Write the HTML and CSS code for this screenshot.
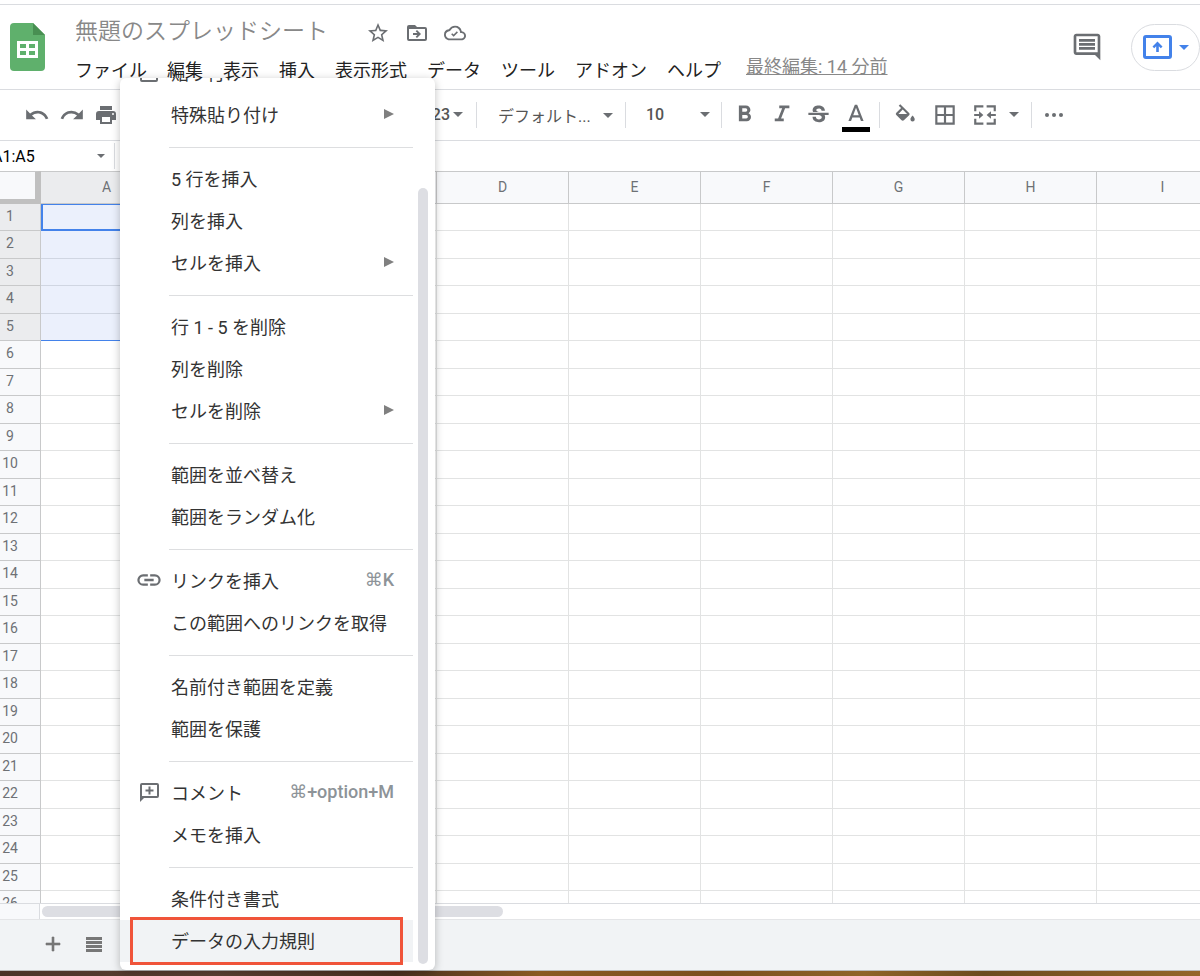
FILE: index.html
```html
<!DOCTYPE html>
<html lang="ja">
<head>
    <meta charset="utf-8">
    <title>無題のスプレッドシート</title>
    <link rel="stylesheet" href="styles.css">
</head>
<body>
    <header class="header">
        <a href="#" class="logo" aria-label="ホーム">
            <svg width="36" height="48" viewBox="0 0 36 48">
                <path d="M4 0H23L35 12V44a4 4 0 0 1-4 4H4a4 4 0 0 1-4-4V4a4 4 0 0 1 4-4z" fill="#5fb06c"/>
                <path d="M23 0L35 12H23z" fill="#488f52"/>
                <path d="M7 18H28V35H7zM10 21v4h6v-4zM19 21v4h6v-4zM10 28v4h6v-4zM19 28v4h6v-4z" fill="#fff" fill-rule="evenodd"/>
            </svg>
        </a>
        <div class="title-area">
            <div class="title-row">
                <h1>無題のスプレッドシート</h1>
                <button aria-label="スターを付ける">
                    <svg width="24" height="24" viewBox="0 0 24 24"><path d="M22 9.24l-7.19-.62L12 2 9.19 8.63 2 9.24l5.46 4.73L5.82 21 12 17.27 18.18 21l-1.63-7.03L22 9.24zM12 15.4l-3.76 2.27 1-4.28-3.32-2.88 4.38-.38L12 6.1l1.71 4.04 4.38.38-3.32 2.88 1 4.28L12 15.4z"/></svg>
                </button>
                <button aria-label="移動">
                    <svg width="24" height="24" viewBox="0 0 24 24"><path d="M20 6h-8l-2-2H4a2 2 0 0 0-2 2v12a2 2 0 0 0 2 2h16a2 2 0 0 0 2-2V8a2 2 0 0 0-2-2zm0 12H4V8h16zM12 9l4 4-4 4-1.3-1.3 1.7-1.7H8v-2h4.4l-1.7-1.7z"/></svg>
                </button>
                <button aria-label="保存状況">
                    <svg width="22" height="22" viewBox="0 0 24 24"><path d="M19.35 10.04A7.49 7.49 0 0 0 12 4C9.11 4 6.6 5.64 5.35 8.04A5.994 5.994 0 0 0 0 14c0 3.31 2.69 6 6 6h13c2.76 0 5-2.24 5-5 0-2.64-2.05-4.78-4.65-4.96zM19 18H6c-2.21 0-4-1.79-4-4 0-2.05 1.53-3.76 3.56-3.97l1.07-.11.5-.95A5.469 5.469 0 0 1 12 6c2.62 0 4.88 1.86 5.39 4.43l.3 1.5 1.53.11A2.98 2.98 0 0 1 22 15c0 1.65-1.35 3-3 3zm-8.500-4.300L9 12.200 7.800 13.400l2.700 2.700 4.700-4.700-1.200-1.200z"/></svg>
                </button>
            </div>
            <nav class="menubar">
                <button>ファイル</button>
                <button>編集</button>
                <button>表示</button>
                <button>挿入</button>
                <button>表示形式</button>
                <button>データ</button>
                <button>ツール</button>
                <button>アドオン</button>
                <button>ヘルプ</button>
                <a href="#">最終編集: 14 分前</a>
            </nav>
        </div>
        <div class="header-right">
            <button aria-label="コメント履歴">
                <svg width="32" height="32" viewBox="0 0 24 24"><path d="M21.99 4c0-1.100-.89-2-1.990-2H4c-1.100 0-2 .9-2 2v12c0 1.100.9 2 2 2h14l4 4-.01-18zM20 4v12H4V4zM6 6h12v2H6zm0 3h12v2H6zm0 3h12v2H6z"/></svg>
            </button>
            <button class="present" aria-label="会議に参加">
                <svg width="29" height="24" viewBox="0 0 29 24"><rect x="1.500" y="1.500" width="26" height="21" rx="1.500" fill="none" stroke="#4382ea" stroke-width="3"/><path d="M14.500 6.500l5 5-1.700 1.700-2-2V17h-2.600v-5.800l-2 2-1.700-1.700z"/></svg>
                <span class="arrow"></span>
            </button>
        </div>
    </header>

    <div class="toolbar">
        <button aria-label="元に戻す">
            <svg width="26" height="26" viewBox="0 0 24 24"><path d="M12.500 8c-2.650 0-5.050.99-6.900 2.600L2 7v9h9l-3.620-3.620A7.950 7.950 0 0 1 12.500 10.500c3.540 0 6.550 2.310 7.600 5.500l2.370-.78C21.080 11.030 17.150 8 12.500 8z"/></svg>
        </button>
        <button aria-label="やり直し">
            <svg width="26" height="26" viewBox="0 0 24 24"><path d="M18.400 10.600A10.500 10.500 0 0 0 11.500 8c-4.650 0-8.580 3.030-9.960 7.220L3.900 16a8 8 0 0 1 7.600-5.500c1.950 0 3.730.72 5.120 1.880L13 16h9V7z"/></svg>
        </button>
        <button aria-label="印刷">
            <svg width="24" height="24" viewBox="0 0 24 24"><path d="M19 8H5a3 3 0 0 0-3 3v6h4v4h12v-4h4v-6a3 3 0 0 0-3-3zm-3 11H8v-5h8zm3-7a1 1 0 1 1 0-2 1 1 0 0 1 0 2zM18 3H6v4h12z"/></svg>
        </button>
        <button class="formats">123<span class="arrow"></span></button>
        <span class="divider"></span>
        <button class="font-name">デフォルト...<span class="arrow"></span></button>
        <span class="divider"></span>
        <button class="font-size">10<span class="arrow"></span></button>
        <span class="divider"></span>
        <div class="tools">
            <button aria-label="太字">
                <svg width="27" height="27" viewBox="0 0 24 24"><path d="M15.600 10.790c.97-.67 1.650-1.770 1.650-2.790 0-2.260-1.750-4-4-4H7v14h7.040c2.090 0 3.710-1.700 3.710-3.790 0-1.520-.86-2.820-2.150-3.420zM10 6.500h3a1.500 1.500 0 0 1 0 3h-3zm3.500 9H10v-3h3.500a1.500 1.500 0 0 1 0 3z"/></svg>
            </button>
            <button aria-label="斜体">
                <svg width="27" height="27" viewBox="0 0 24 24"><path d="M10 4v2.500h2.600l-3.600 9H6V18h8v-2.500h-2.400l3.600-9H19V4z"/></svg>
            </button>
            <button aria-label="取り消し線">
                <svg width="27" height="27" viewBox="0 0 24 24"><path d="M7.200 9.800c-1.200-2.300.5-5 2.900-5.500 3.100-.9 7.600.4 7.600 4.400h-3c0-.3-.1-.6-.1-.8-.2-.6-.6-.9-1.200-1.100-.8-.3-2.100-.2-2.800.3-1.400 1.200.1 2.200 1.700 2.700H7.400c-.1-.1-.1-.1-.2 0zM21 12.500v-2H3v2h9.600c1.100.5 2.300.8 2.300 2 0 1.300-1.200 1.900-2.500 1.900-1.500 0-2.700-.6-2.700-2.300h-3c0 3.500 2.800 4.700 5.700 4.700 2.900 0 5.500-1.200 5.500-4.400 0-.8-.2-1.300-.5-1.900z"/></svg>
            </button>
            <button class="text-color" aria-label="テキストの色">
                <svg width="28" height="26" viewBox="0 0 24 22"><path d="M11 3L5.500 17h2.250l1.120-3h6.250l1.120 3h2.250L13 3zm-1.380 9L12 5.670 14.380 12z"/></svg>
            </button>
        </div>
        <span class="divider"></span>
        <div class="tools wide">
            <button aria-label="塗りつぶしの色">
                <svg width="26" height="26" viewBox="0 0 24 24"><path d="M15.800 10.200L7.620 2 6.210 3.410l2.180 2.180-4.400 4.400a1.490 1.490 0 0 0 0 2.120l4.850 4.850c.29.29.68.44 1.060.44s.77-.15 1.060-.44l4.840-4.640c.59-.58.59-1.530 0-2.120zM5.900 11L9.900 7l4 4zM19 12.500s-2 2.170-2 3.500a2 2 0 0 0 4 0c0-1.330-2-3.500-2-3.500z"/></svg>
            </button>
            <button aria-label="枠線">
                <svg width="26" height="26" viewBox="0 0 24 24"><path d="M3 3v18h18V3zm8 16H5v-6h6zm0-8H5V5h6zm8 8h-6v-6h6zm0-8h-6V5h6z"/></svg>
            </button>
            <button class="merge" aria-label="セルを結合">
                <svg width="26" height="26" viewBox="0 0 24 24"><path d="M2 3h8.500v2H4v3.500H2zM13.500 3H22v5.500h-2V5h-6.500zM2 15.500h2V19h6.500v2H2zM20 15.500h2V21h-8.500v-2H20zM2 11h4.500V8.500L10.500 12l-4 3.500V13H2zM22 11h-4.500V8.500l-4 3.500 4 3.500V13H22z"/></svg>
                <span class="arrow"></span>
            </button>
        </div>
        <span class="divider"></span>
        <button class="more" aria-label="その他">
            <svg width="20" height="6" viewBox="0 0 20 6"><circle cx="3" cy="3" r="2"/><circle cx="10" cy="3" r="2"/><circle cx="17" cy="3" r="2"/></svg>
        </button>
    </div>

    <div class="formula-bar">
        <input type="text" class="name-box" value="A1:A5" aria-label="名前ボックス">
        <span class="arrow small"></span>
        <input type="text" class="formula" aria-label="数式">
    </div>

    <main class="sheet">
        <table>
            <thead>
                <tr id="columns"><th class="corner"></th></tr>
            </thead>
            <tbody id="rows"></tbody>
        </table>
    </main>

    <div class="scroll-row">
        <div class="scroll-corner"></div>
        <div class="h-thumb"></div>
    </div>

    <footer class="footer">
        <button aria-label="シートを追加">
            <svg width="24" height="24" viewBox="0 0 24 24"><path d="M19 13h-6v6h-2v-6H5v-2h6V5h2v6h6z" stroke="#777" stroke-width=".6"/></svg>
        </button>
        <button aria-label="すべてのシート">
            <svg width="24" height="24" viewBox="0 0 24 24"><path d="M4 5h16v3H4zM4 9h16v3H4zM4 13h16v3H4zM4 17h16v3H4z"/></svg>
        </button>
    </footer>
    <div class="desktop"></div>

    <div class="menu">
        <div class="menu-list">
            <button class="item">
                <svg width="24" height="24" viewBox="0 0 24 24"><path d="M19 2h-4.180a3 3 0 0 0-5.640 0H5a2 2 0 0 0-2 2v16a2 2 0 0 0 2 2h14a2 2 0 0 0 2-2V4a2 2 0 0 0-2-2zm0 18H5V4h2v3h10V4h2z"/></svg>
                貼り付け<kbd>⌘V</kbd>
            </button>
            <button class="item sub">特殊貼り付け</button>
            <hr>
            <button class="item">5 行を挿入</button>
            <button class="item">列を挿入</button>
            <button class="item sub">セルを挿入</button>
            <hr>
            <button class="item">行 1 - 5 を削除</button>
            <button class="item">列を削除</button>
            <button class="item sub">セルを削除</button>
            <hr>
            <button class="item">範囲を並べ替え</button>
            <button class="item">範囲をランダム化</button>
            <hr>
            <button class="item">
                <svg width="28" height="28" viewBox="0 0 24 24"><path d="M3.900 12c0-1.710 1.390-3.100 3.100-3.100h4V7H7a5 5 0 0 0 0 10h4v-1.900H7A3.100 3.100 0 0 1 3.900 12zM8 13h8v-2H8zm9-6h-4v1.900h4a3.100 3.100 0 0 1 0 6.200h-4V17h4a5 5 0 0 0 0-10z"/></svg>
                リンクを挿入<kbd>⌘K</kbd>
            </button>
            <button class="item">この範囲へのリンクを取得</button>
            <hr>
            <button class="item">名前付き範囲を定義</button>
            <button class="item">範囲を保護</button>
            <hr>
            <button class="item">
                <svg width="24" height="24" viewBox="0 0 24 24"><path d="M20 3H5a2 2 0 0 0-2 2v17l4-4h13a2 2 0 0 0 2-2V5a2 2 0 0 0-2-2zm0 13H5V5h15zM11.500 14.500h2v-3h3v-2h-3v-3h-2v3h-3v2h3z"/></svg>
                コメント<kbd>⌘+option+M</kbd>
            </button>
            <button class="item">メモを挿入</button>
            <hr>
            <button class="item">条件付き書式</button>
            <button class="item active">データの入力規則</button>
        </div>
        <div class="v-thumb"></div>
        <div class="highlight"></div>
    </div>

    <script>
        var columns = document.getElementById("columns");
        var rows = document.getElementById("rows");
        var letters = "ABCDEFGHI";

        for (var i = 0; i < letters.length; i++) {
            var th = document.createElement("th");
            th.textContent = letters[i];
            columns.appendChild(th);
        }

        for (var n = 1; n <= 26; n++) {
            var tr = document.createElement("tr");
            // rows 1 to 5 are selected
            if (n <= 5) {
                tr.className = "selected";
            }
            tr.innerHTML = "<th>" + n + "</th>" + "<td></td>".repeat(letters.length);
            rows.appendChild(tr);
        }
    </script>
</body>
</html>
```
FILE: styles.css
```css
* {
  box-sizing: border-box;
}

body {
  margin: 0;
  height: 100vh;
  display: flex;
  flex-direction: column;
  overflow: hidden;
  position: relative;
  background: #fff;
  color: #333;
  font-family: Roboto, "Noto Sans CJK JP", sans-serif;
}

button {
  display: flex;
  align-items: center;
  justify-content: center;
  flex: none;
  padding: 0;
  border: 0;
  background: none;
  color: inherit;
  font: inherit;
  white-space: nowrap;
}

svg {
  display: block;
  flex: none;
  fill: #6b6e72;
}

.arrow {
  border: 5px solid transparent;
  border-top-color: #6b6e72;
  border-bottom: 0;
}

.arrow.small {
  border-width: 4px;
  border-bottom: 0;
}

/* header */
.header {
  display: flex;
  flex: none;
  height: 86px;
  margin-top: 4px;
  border-top: 1px solid #dadce0;
  border-bottom: 1px solid #dadce0;
}

.logo {
  padding: 18px 0 0 10px;
  width: 75px;
  flex: none;
}

.title-row {
  display: flex;
  align-items: center;
  height: 52px;
  padding-top: 4px;
  gap: 15px;
}

h1 {
  margin: 0 23px 2px 0;
  font-size: 23px;
  line-height: 32px;
  font-weight: 350;
  color: #888;
}

.menubar {
  display: flex;
  align-items: center;
  height: 24px;
  gap: 20px;
  font-size: 18px;
  color: #222;
}

.menubar a {
  margin: 0 0 8px 5px;
  color: #888;
  white-space: nowrap;
}

.header-right {
  display: flex;
  align-items: center;
  gap: 28px;
  height: 84px;
  margin-left: auto;
}

.present {
  width: 69px;
  height: 47px;
  gap: 7px;
  border: 1px solid #dadce0;
  border-radius: 24px;
}

.present svg {
  fill: #4382ea;
}

.present .arrow {
  border-top-color: #4382ea;
}

/* toolbar */
.toolbar {
  display: flex;
  align-items: center;
  flex: none;
  height: 51px;
  padding-left: 24px;
  gap: 9px;
  border-bottom: 1px solid #dadce0;
  font-size: 16px;
  font-weight: 500;
  color: #555;
}

.toolbar button {
  padding-bottom: 1px;
}

.divider {
  width: 1px;
  height: 26px;
  background: #dadce0;
}

.toolbar .formats {
  width: 340px;
  justify-content: flex-end;
  gap: 3px;
  padding-right: 4px;
}

.toolbar .font-name {
  width: 130px;
  justify-content: space-between;
  padding: 0 3px 0 12px;
  font-weight: 400;
}

.toolbar .font-size {
  width: 77px;
  justify-content: space-between;
  padding: 0 2px 2px 11px;
}

.tools {
  display: flex;
  align-items: center;
  gap: 10px;
}

.tools.wide {
  gap: 14px;
  padding: 0 3px;
}

.toolbar .text-color {
  padding: 2px 0 0;
  border-bottom: 5px solid #000;
}

.merge {
  gap: 11px;
}

.more {
  margin-left: 3px;
}

/* name box */
.formula-bar {
  display: flex;
  align-items: center;
  flex: none;
  height: 30px;
}

.formula-bar input {
  height: 26px;
  padding: 0;
  border: 0;
  background: none;
  font: 16px Roboto, sans-serif;
}

.name-box {
  width: 97px;
  text-indent: -8px;
}

.formula-bar .formula {
  flex: 1;
  margin-left: 9px;
  border-left: 1px solid #dadce0;
}

/* grid */
.sheet {
  flex: 1;
  min-height: 0;
  overflow: hidden;
  border-bottom: 1px solid #dadce0;
}

table {
  table-layout: fixed;
  width: 100%;
  min-width: 1229px;
  border-collapse: separate;
  border-spacing: 0;
}

th, td {
  padding: 0;
  height: 27px;
  border-right: 1px solid #e2e3e3;
  border-bottom: 1px solid #e2e3e3;
}

tbody tr:nth-child(even) > * {
  height: 28px;
}

th {
  width: 132px;
  background: #f8f9fb;
  border-color: #c8c9ca;
  color: #6e7175;
  font-size: 14px;
  line-height: 25px;
  font-weight: 400;
}

th:last-child {
  width: auto;
}

thead th {
  height: 33px;
  border-top: 1px solid #c8c9ca;
}

thead th:nth-child(2) {
  background: #ebecee;
}

thead .corner {
  width: 41px;
  border-right: 6px solid #c0c0c0;
  border-bottom: 5px solid #c0c0c0;
}

tbody th {
  padding-right: 20px;
  vertical-align: top;
}

.selected th {
  background: #ebecee;
}

.selected td:nth-child(2) {
  background: #ebf0fc;
  border-color: #d0d6e2;
}

.selected:nth-child(1) td:nth-child(2) {
  border: 2px solid #4382ea;
  border-top-width: 1px;
}

.selected:nth-child(5) td:nth-child(2) {
  border-bottom-color: #4382ea;
}

.scroll-row {
  display: flex;
  align-items: center;
  flex: none;
  height: 15px;
}

.scroll-corner {
  width: 40px;
  height: 15px;
  background: #f8f9fb;
  border-right: 1px solid #dadce0;
}

.h-thumb {
  width: 461px;
  height: 11px;
  margin-left: 2px;
  border-radius: 6px;
  background: #dddee3;
}

.footer {
  display: flex;
  align-items: center;
  flex: none;
  height: 52px;
  padding: 0 0 3px 41px;
  gap: 17px;
  background: #f1f3f5;
  border-top: 1px solid #e4e5e7;
  border-bottom: 1px solid #bbb;
}

.footer svg {
  fill: #777;
}

.desktop {
  flex: none;
  height: 5px;
  background: linear-gradient(90deg, #4a3327, #5c4033 18%, #4a3020 33%, #8a5a22 45%, #7a4f1e 60%, #8f6428 72%, #6b4a1e 82%, #94662a);
}

/* edit menu */
.menu {
  position: absolute;
  top: 78px;
  bottom: 6px;
  left: 120px;
  width: 315px;
  overflow: hidden;
  border-radius: 6px;
  background: #fff;
  box-shadow: 0 2px 8px rgba(0, 0, 0, .25);
}

.menu-list {
  display: flex;
  flex-direction: column;
  justify-content: flex-end;
  height: 100%;
  width: 293px;
  padding-bottom: 8px;
}

.item {
  position: relative;
  justify-content: flex-start;
  height: 42px;
  padding: 0 19px 3px 51px;
  font-size: 18px;
  color: #333;
}

.item svg {
  position: absolute;
  left: 29px;
  transform: translateX(-50%);
}

.item kbd {
  margin-left: auto;
  font-family: Roboto, "DejaVu Sans", sans-serif;
  font-weight: 500;
  color: #8d9398;
}

.item.sub::after {
  content: "";
  margin-left: auto;
  border: 5px solid transparent;
  border-left: 10px solid #808080;
  border-right: 0;
}

.item.active {
  background: #f1f3f5;
}

.menu hr {
  flex: none;
  width: 244px;
  height: 1px;
  margin: 11px 0 10px 49px;
  border: 0;
  background: #dddee0;
}

.v-thumb {
  position: absolute;
  top: 110px;
  right: 7px;
  bottom: 6px;
  width: 10px;
  border-radius: 5px;
  background: #dddee3;
}

.highlight {
  position: absolute;
  left: 10px;
  bottom: 5px;
  width: 273px;
  height: 48px;
  border: 3px solid #f0543a;
}
```
